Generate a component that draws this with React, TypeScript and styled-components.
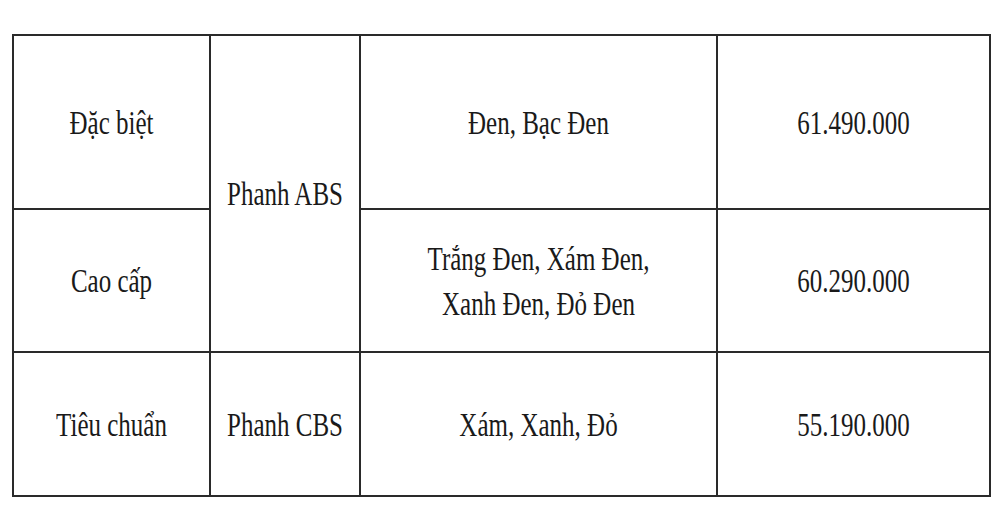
import React from 'react';
import styled, { createGlobalStyle } from 'styled-components';

const GlobalStyle = createGlobalStyle`
  html, body {
    margin: 0;
    padding: 0;
    background: #ffffff;
  }
`;

const Page = styled.div`
  width: 1000px;
  height: 524px;
  padding: 34px 0 0 12px;
  box-sizing: border-box;
  background: #fff;
`;

const StyledTable = styled.table`
  width: 977px;
  border-collapse: collapse;
  table-layout: fixed;
  font-family: "Liberation Serif", "Times New Roman", serif;
  color: #1a1a1a;
`;

const Row = styled.tr<{ h: number }>`
  height: ${({ h }) => h}px;
`;

const Cell = styled.td`
  border: 2px solid #2a2a2a;
  padding: 0;
  text-align: center;
  vertical-align: middle;
`;

// the picture is stretched vertically, so the glyphs are drawn tall and narrow
const Label = styled.span`
  display: inline-block;
  font-size: 25px;
  line-height: 33px;
  transform: scaleY(1.36);
`;

type Price = {
  version: string;
  brake?: string;
  brakeSpan?: number;
  colors: string[];
  price: string;
  height: number;
};

const rows: Price[] = [
  { version: 'Đặc biệt', brake: 'Phanh ABS', brakeSpan: 2, colors: ['Đen, Bạc Đen'], price: '61.490.000', height: 174 },
  { version: 'Cao cấp', colors: ['Trắng Đen, Xám Đen,', 'Xanh Đen, Đỏ Đen'], price: '60.290.000', height: 143 },
  { version: 'Tiêu chuẩn', brake: 'Phanh CBS', colors: ['Xám, Xanh, Đỏ'], price: '55.190.000', height: 144 },
];

export default function App() {
  return (
    <>
      <GlobalStyle />
      <Page>
        <StyledTable>
          <colgroup>
            <col style={{ width: 197 }} />
            <col style={{ width: 150 }} />
            <col style={{ width: 357 }} />
            <col style={{ width: 273 }} />
          </colgroup>
          <tbody>
            {rows.map((r) => (
              <Row key={r.version} h={r.height}>
                <Cell><Label>{r.version}</Label></Cell>
                {r.brake && (
                  <Cell rowSpan={r.brakeSpan}><Label>{r.brake}</Label></Cell>
                )}
                <Cell>
                  <Label>
                    {r.colors.map((c, i) => (
                      <React.Fragment key={c}>
                        {i > 0 && <br />}
                        {c}
                      </React.Fragment>
                    ))}
                  </Label>
                </Cell>
                <Cell><Label>{r.price}</Label></Cell>
              </Row>
            ))}
          </tbody>
        </StyledTable>
      </Page>
    </>
  );
}
